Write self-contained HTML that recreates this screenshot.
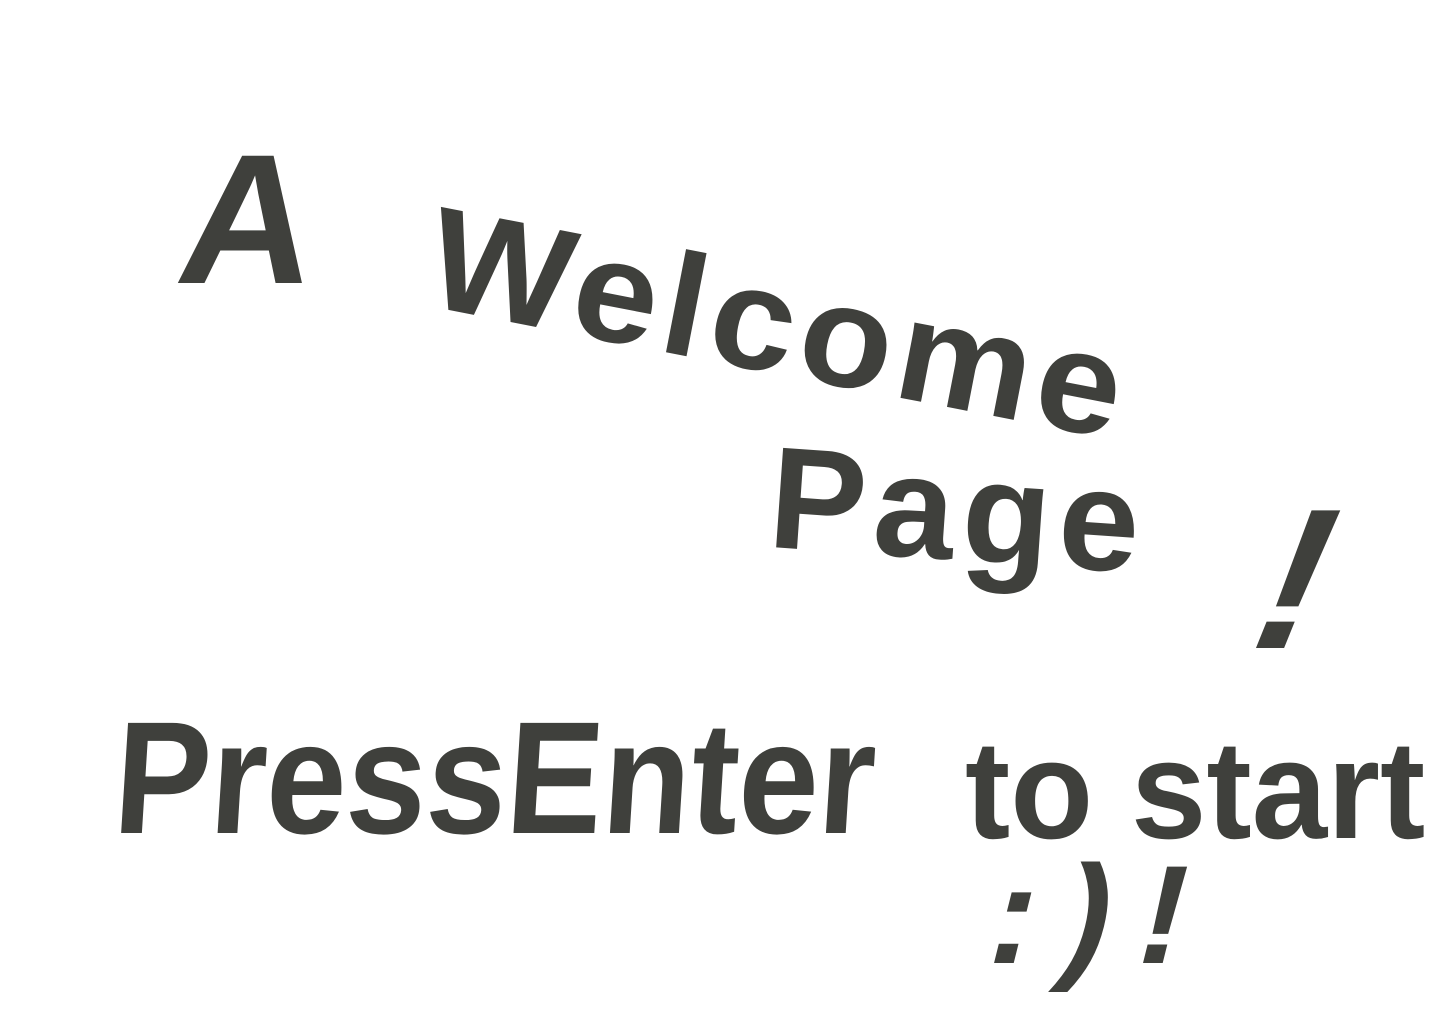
<!DOCTYPE html>
<html><head><meta charset="utf-8"><style>
html,body{margin:0;padding:0;background:#fff;width:1440px;height:1024px;overflow:hidden}
.t{position:absolute;font-family:"Liberation Sans",sans-serif;font-weight:bold;color:#3f403c;white-space:nowrap;line-height:1;transform-origin:0 0}
</style></head><body>
<div class="t" style="left:195px;top:128px;font-size:185px;transform:skewX(-8deg)">A</div>
<div class="t" style="left:445px;top:185px;font-size:145px;letter-spacing:6px;transform:rotate(11deg) scaleX(1.05)">Welcome</div>
<div class="t" style="left:775px;top:425px;font-size:145px;letter-spacing:8px;transform:rotate(4deg)">Page</div>
<div class="t" style="left:1305px;top:480px;font-size:200px;transform:skewX(-22deg)">!</div>
<div class="t" style="left:120px;top:698px;font-size:160px;transform:scaleX(0.9) skewX(-4deg)">PressEnter</div>
<div class="t" style="left:965px;top:720px;font-size:140px;transform:scaleX(0.97)">to start</div>
<div class="t" style="left:1010px;top:845px;font-size:140px;letter-spacing:28px;transform:skewX(-14deg)">:)!</div>
</body></html>
